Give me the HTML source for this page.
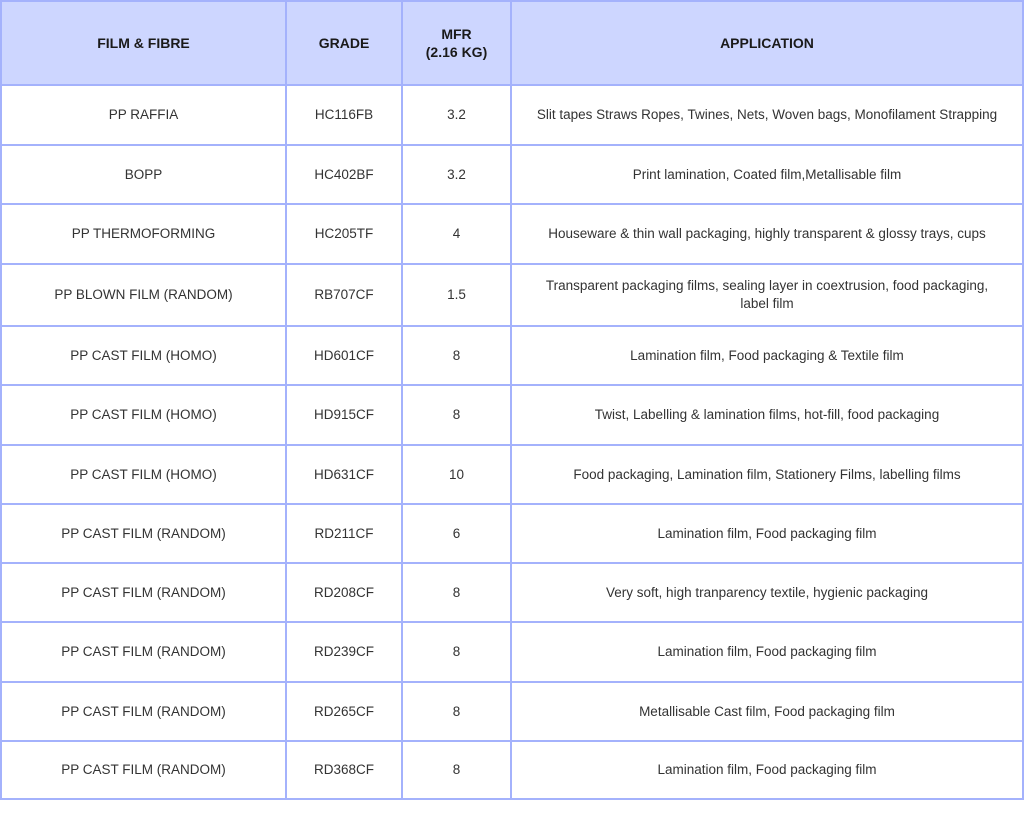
<!DOCTYPE html><html><head><meta charset="utf-8"><style>
body{margin:0;width:1024px;height:813px;background:#fff;font-family:"Liberation Sans",sans-serif;position:relative;overflow:hidden}
.h{position:absolute;left:0;width:1024px;height:2px;background:#a4b2fc}
.v{position:absolute;top:0;width:2px;height:800px;background:#a4b2fc}
.c{position:absolute;display:flex;align-items:center;justify-content:center;text-align:center;font-size:13.5px;color:#333;line-height:18px}
.hd{font-weight:bold;font-size:14px;color:#1a1a1a}
</style></head><body>
<div style="position:absolute;left:0;top:0;width:1024px;height:85px;background:#cdd6ff"></div>
<div id="g"></div>
<script>
var rows=[0,84,144,203,263,325,384,444,503,562,621,681,740,798];
var cols=[0,285,401,510,1022];
var data=[["FILM &amp; FIBRE","GRADE","MFR<br>(2.16 KG)","APPLICATION"],
["PP RAFFIA","HC116FB","3.2","Slit tapes Straws Ropes, Twines, Nets, Woven bags, Monofilament Strapping"],
["BOPP","HC402BF","3.2","Print lamination, Coated film,Metallisable film"],
["PP THERMOFORMING","HC205TF","4","Houseware &amp; thin wall packaging, highly transparent &amp; glossy trays, cups"],
["PP BLOWN FILM (RANDOM)","RB707CF","1.5","Transparent packaging films, sealing layer in coextrusion, food packaging,<br>label film"],
["PP CAST FILM (HOMO)","HD601CF","8","Lamination film, Food packaging &amp; Textile film"],
["PP CAST FILM (HOMO)","HD915CF","8","Twist, Labelling &amp; lamination films, hot-fill, food packaging"],
["PP CAST FILM (HOMO)","HD631CF","10","Food packaging, Lamination film, Stationery Films, labelling films"],
["PP CAST FILM (RANDOM)","RD211CF","6","Lamination film, Food packaging film"],
["PP CAST FILM (RANDOM)","RD208CF","8","Very soft, high tranparency textile, hygienic packaging"],
["PP CAST FILM (RANDOM)","RD239CF","8","Lamination film, Food packaging film"],
["PP CAST FILM (RANDOM)","RD265CF","8","Metallisable Cast film, Food packaging film"],
["PP CAST FILM (RANDOM)","RD368CF","8","Lamination film, Food packaging film"]];
var h="";
for(var r=0;r<data.length;r++)for(var c=0;c<4;c++){
h+='<div class="c'+(r==0?' hd':'')+'" style="left:'+cols[c]+'px;top:'+rows[r]+'px;width:'+(cols[c+1]-cols[c]+2)+'px;height:'+(rows[r+1]-rows[r]+2)+'px">'+data[r][c]+'</div>';}
rows.forEach(function(y){h+='<div class="h" style="top:'+y+'px;width:1024px"></div>'});
cols.forEach(function(x){h+='<div class="v" style="left:'+x+'px"></div>'});
document.getElementById("g").innerHTML=h;
</script>
</body></html>
